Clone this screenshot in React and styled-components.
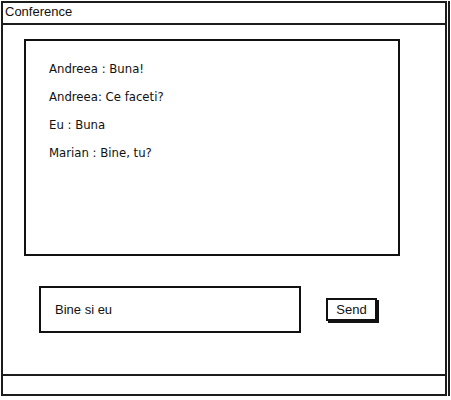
import styled, { createGlobalStyle } from 'styled-components'

const GlobalStyle = createGlobalStyle`
    html, body {
        margin: 0;
        padding: 0;
        background: #fff;
    }
    * {
        box-sizing: border-box;
    }
`

const messages = [
    'Andreea : Buna!',
    'Andreea: Ce faceti?',
    'Eu : Buna',
    'Marian : Bine, tu?',
]

const App = () => {
    return (
        <>
            <GlobalStyle />
            <Window>
                <TitleBar>Conference</TitleBar>
                <Body>
                    <ChatPanel>
                        {messages.map((m, i) => (
                            <Message key={i}>{m}</Message>
                        ))}
                    </ChatPanel>
                    <InputRow>
                        <MessageInput>Bine si eu</MessageInput>
                        <SendButton>Send</SendButton>
                    </InputRow>
                </Body>
                <StatusBar />
            </Window>
        </>
    )
}

export default App

const Window = styled.div`
    display: flex;
    flex-direction: column;
    width: 446px;
    height: 395px;
    margin: 1px 0 0 1px;
    border: 2px solid #1c1c1c;
    box-shadow: 1px 0 0 #fff, 3px 0 0 #1c1c1c;
    font-family: 'Liberation Sans', Arial, sans-serif;
    color: #111;
`
const TitleBar = styled.div`
    height: 22px;
    padding-left: 2px;
    border-bottom: 2px solid #1c1c1c;
    font-size: 13px;
    line-height: 18px;
`
const Body = styled.div`
    flex: 1;
    display: flex;
    flex-direction: column;
    padding: 14px 0 0 21px;
`
const ChatPanel = styled.div`
    width: 376px;
    height: 217px;
    border: 2px solid #111;
    padding: 14px 0 0 23px;
`
const Message = styled.div`
    font-family: 'Liberation Sans Narrow', 'DejaVu Sans Condensed', 'Liberation Sans', sans-serif;
    font-stretch: condensed;
    font-size: 13px;
    line-height: 28px;
    white-space: nowrap;
`
const InputRow = styled.div`
    display: flex;
    align-items: center;
    gap: 25px;
    margin-top: 30px;
    padding-left: 15px;
`
const MessageInput = styled.div`
    width: 262px;
    height: 47px;
    border: 2px solid #111;
    padding-left: 14px;
    font-size: 13px;
    line-height: 43px;
`
const SendButton = styled.button`
    width: 51px;
    height: 23px;
    padding: 0;
    border: 2px solid #111;
    box-shadow: 2px 2px 0 #111;
    font-family: 'Liberation Sans', Arial, sans-serif;
    font-size: 13px;
    line-height: 19px;
    color: #111;
    background: #fff;
`
const StatusBar = styled.div`
    height: 20px;
    border-top: 2px solid #1c1c1c;
`
